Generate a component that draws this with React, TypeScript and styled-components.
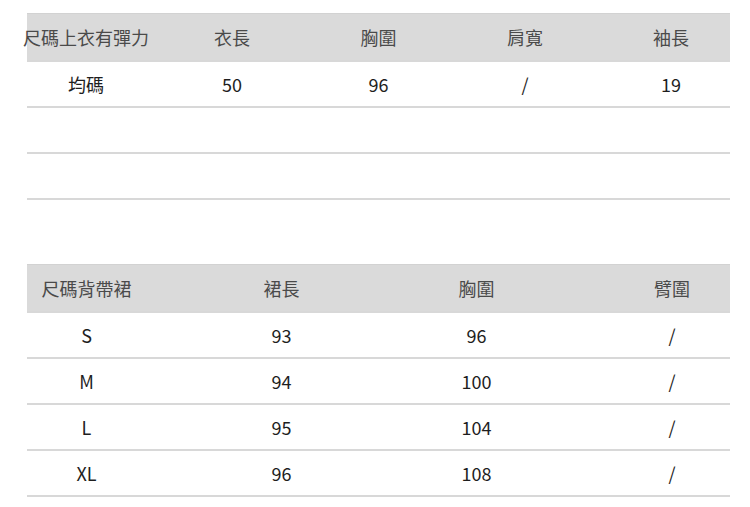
import styled, { createGlobalStyle } from "styled-components";

const GlobalStyle = createGlobalStyle`
    body {
        margin: 0;
        background: #fff;
        font-family: "Noto Sans CJK TC", "Noto Sans", sans-serif;
    }
`;

const Page = styled.div`
    width: 750px;
    height: 507px;
    padding: 13px 20px 0 27px;
    box-sizing: border-box;
    display: flex;
    flex-direction: column;
    gap: 64px;
    overflow: hidden;
`;

const Table = styled.div`
    width: 703px;
    border-top: 1px solid #d2d2d2;
`;

const Row = styled.div<{ $cols: string; $head?: boolean }>`
    display: grid;
    grid-template-columns: ${(p) => p.$cols};
    height: ${(p) => (p.$head ? 46 : 44)}px;
    border-bottom: 2px solid #d8d8d8;
    background: ${(p) => (p.$head ? "#dadada" : "#fff")};
    color: ${(p) => (p.$head ? "#4a4a4a" : "#1e1e1e")};
    font-size: 18px;
`;

const Cell = styled.div<{ $pl?: number; $pr?: number }>`
    display: flex;
    align-items: center;
    justify-content: center;
    padding-left: ${(p) => p.$pl ?? 0}px;
    padding-right: ${(p) => p.$pr ?? 0}px;
    white-space: nowrap;
`;

interface TableProps {
    cols: string;
    pads: [number, number][];
    head: string[];
    rows: string[][];
}

const SizeTable = ({ cols, pads, head, rows }: TableProps) => (
    <Table>
        <Row $cols={cols} $head>
            {head.map((h, i) => (
                <Cell key={i} $pl={pads[i][0]} $pr={pads[i][1]}>{h}</Cell>
            ))}
        </Row>
        {rows.map((r, ri) => (
            <Row key={ri} $cols={cols}>
                {r.map((c, i) => (
                    <Cell key={i} $pl={pads[i][0]} $pr={pads[i][1]}>{c}</Cell>
                ))}
            </Row>
        ))}
    </Table>
);

export default function App() {
    return (
        <>
            <GlobalStyle />
            <Page>
                <SizeTable
                    cols="132px 146px 147px 146px 132px"
                    pads={[[0, 14], [0, 0], [0, 0], [0, 0], [14, 0]]}
                    head={["尺碼上衣有彈力", "衣長", "胸圍", "肩寬", "袖長"]}
                    rows={[
                        ["均碼", "50", "96", "/", "19"],
                        ["", "", "", "", ""],
                        ["", "", "", "", ""],
                    ]}
                />
                <SizeTable
                    cols="157px 195px 195px 156px"
                    pads={[[0, 38], [0, 0], [0, 0], [40, 0]]}
                    head={["尺碼背帶裙", "裙長", "胸圍", "臂圍"]}
                    rows={[
                        ["S", "93", "96", "/"],
                        ["M", "94", "100", "/"],
                        ["L", "95", "104", "/"],
                        ["XL", "96", "108", "/"],
                    ]}
                />
            </Page>
        </>
    );
}
